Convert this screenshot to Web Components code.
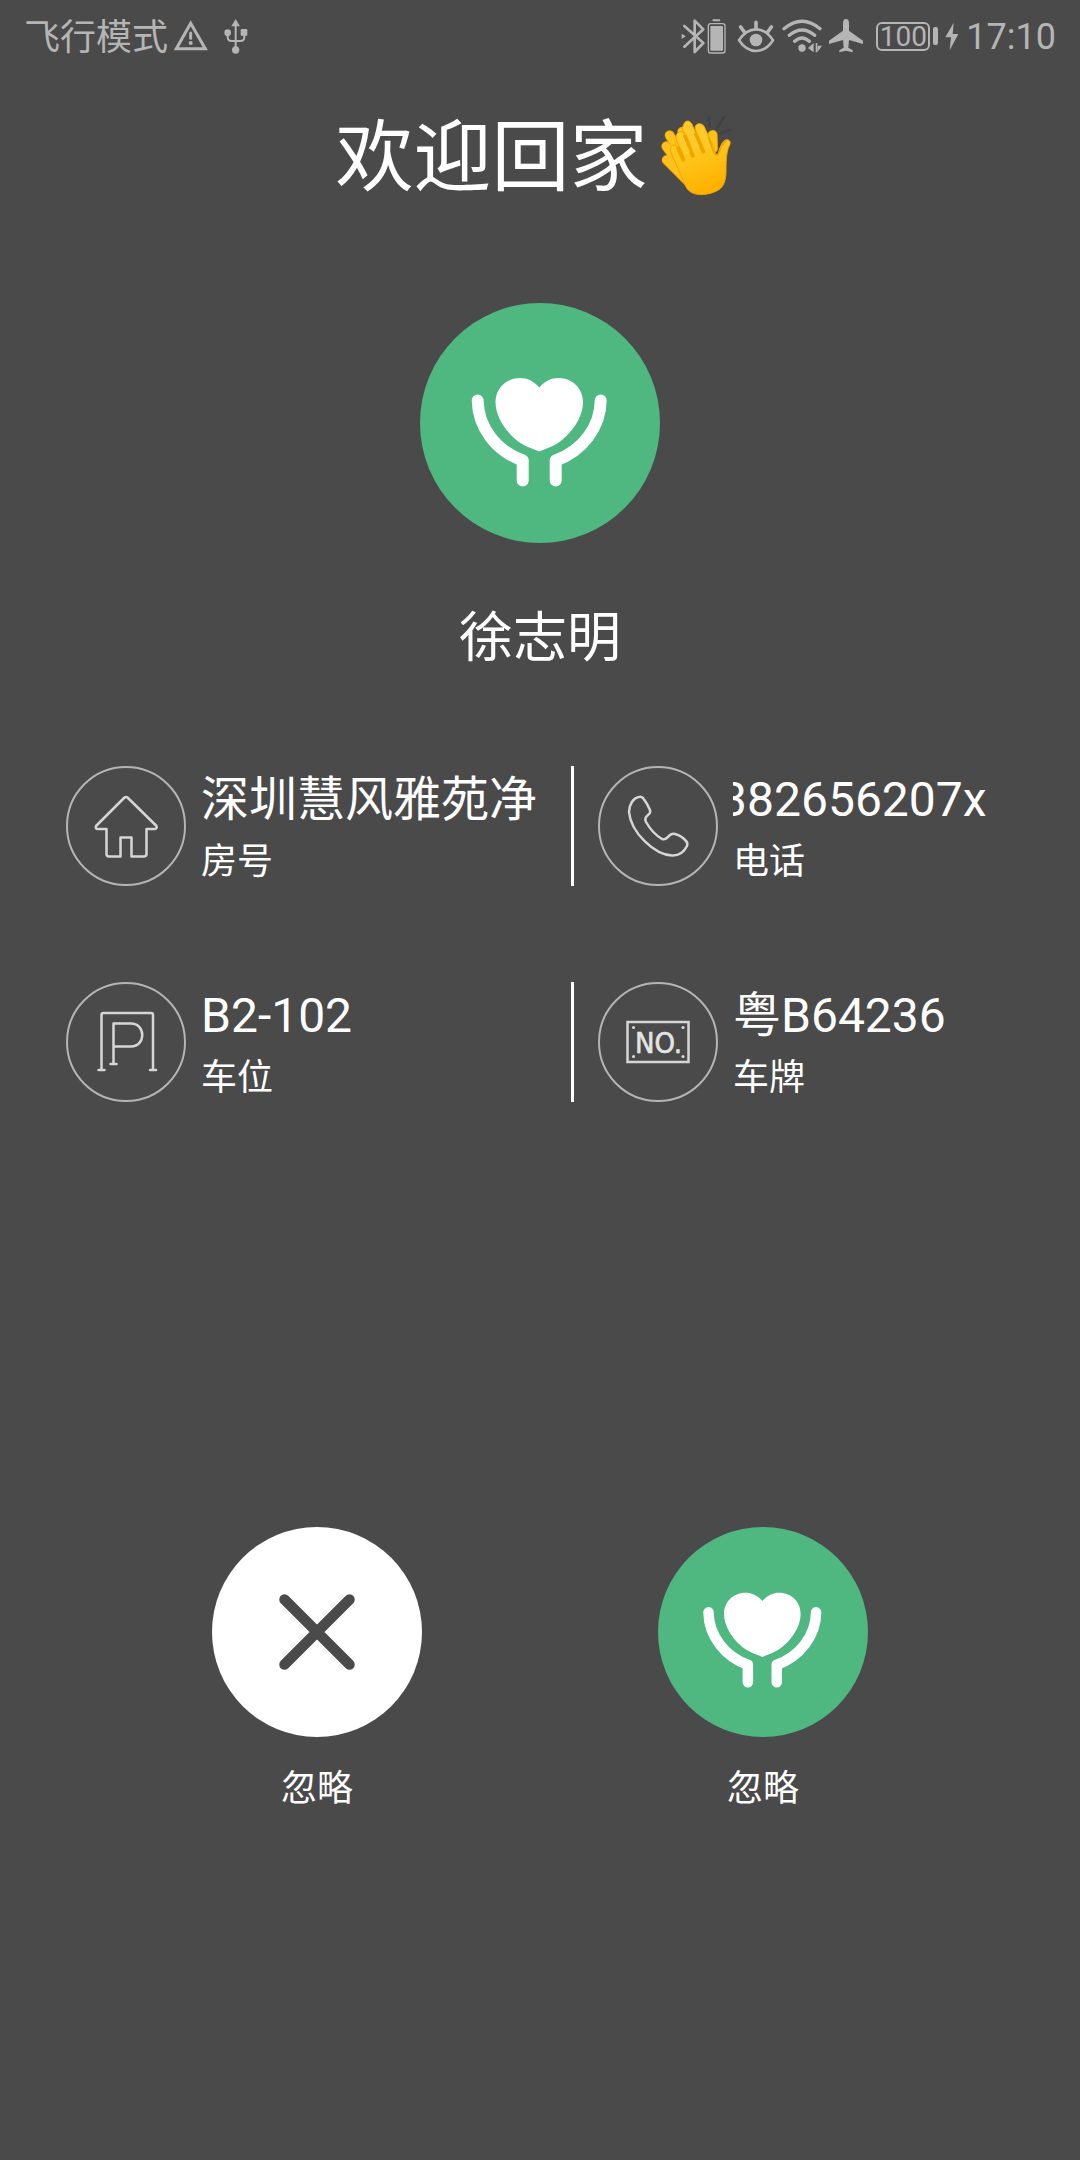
<!DOCTYPE html>
<html lang="zh-CN">
<head>
<meta charset="utf-8">
<meta name="viewport" content="width=device-width, initial-scale=1">
<title>欢迎回家</title>
<style>
  html { background: #4a4a4a; }
  body { margin: 0; color: #fff; font-family: Roboto, "Noto Sans CJK SC", sans-serif; }
</style>
</head>
<body>
<welcome-screen></welcome-screen>

<script>
const define = (name, html) => {
  const template = document.createElement('template');
  template.innerHTML = html;
  customElements.define(name, class extends HTMLElement {
    constructor() {
      super();
      this.attachShadow({ mode: 'open' }).append(template.content.cloneNode(true));
    }
  });
};

/* Android status bar */
define('status-bar', `
<style>
  :host { display: flex; justify-content: space-between; align-items: center; height: 72px; padding: 0 24px; color: #b5b5b5; font-size: 36px; line-height: 48px; box-sizing: border-box; }
  div { display: flex; align-items: center; }
  svg { height: 36px; display: block; fill: none; stroke: currentColor; stroke-linecap: round; stroke-linejoin: round; }
  .solid { fill: currentColor; stroke: none; }
  .left { gap: 6px; }
  .left span { padding-top: 4px; }
  .left svg + svg { margin-left: 10px; }
  .right { gap: 7px; }
  .bluetooth { margin-right: 4px; }
  .level { display: flex; align-items: center; margin-left: 6px; gap: 3px; }
  .level b { box-sizing: border-box; width: 54px; height: 29px; border: 2px solid; border-radius: 6px; font-weight: 400; font-size: 28px; line-height: 26px; text-align: center; }
  .level i { width: 5px; height: 18px; border-radius: 2px; background: currentColor; }
  time { padding-top: 2px; }
</style>
<div class="left">
  <span>飞行模式</span>
  <svg width="34" viewBox="521 54 102 108" aria-hidden="true"><path d="M571 70 L528 146 H615 Z" stroke-width="9" stroke-linejoin="miter"/><path d="M571 99V115" stroke-width="9"/><circle class="solid" cx="571" cy="129" r="6"/></svg>
  <svg width="24" viewBox="671 54 72 108" aria-hidden="true"><path d="M706 72V150M682 98V112Q682 123 694 123H720Q732 123 732 112V98" stroke-width="6"/><path class="solid" d="M706 57L719 79H693Z"/><circle class="solid" cx="682" cy="98" r="10"/><rect class="solid" x="721" y="87" width="20" height="20" rx="3"/><circle class="solid" cx="706" cy="150" r="11"/></svg>
</div>
<div class="right">
  <svg class="bluetooth" width="45" viewBox="58 54 135 108" aria-hidden="true"><path d="M68 78L125 129L99 156V62L125 88L68 140" stroke-width="8"/><path class="solid" d="M60 101L72 109L60 117Z"/><path d="M155 61H173" stroke-width="6"/><rect x="140" y="71" width="50" height="88" rx="7" stroke-width="4"/><rect class="solid" x="146" y="78" width="38" height="74" rx="2"/></svg>
  <svg width="38" viewBox="225 54 114 108" aria-hidden="true"><path d="M231 121Q252 88 282 88Q312 88 333 121Q312 153 282 153Q252 153 231 121Z" stroke-width="8"/><circle class="solid" cx="282" cy="120" r="19"/><path d="M282 67V86M236 81L247 96M328 81L317 96" stroke-width="11"/></svg>
  <svg width="40" viewBox="364 54 120 108" aria-hidden="true"><path d="M370 86Q424 41 478 86M386 106Q424 74 462 106M402 124Q424 104 446 124" stroke-width="10"/><circle class="solid" cx="424" cy="144" r="11"/><path class="solid" d="M459 129V157L442 144ZM465 129V157H469V137H484L470 157V129Z"/></svg>
  <svg width="34" viewBox="507 54 102 108" aria-hidden="true"><path class="solid" d="M558 57Q567 57 567 70V92L609 122V132L567 120L565 143L578 151V157L558 152L538 157V151L551 143L549 120L507 132V122L549 92V70Q549 57 558 57Z"/></svg>
  <span class="level"><b>100</b><i></i></span>
  <svg width="14" viewBox="854 54 42 108" aria-hidden="true"><path class="solid" d="M880 68L855 112H872L868 151L894 102H877Z"/></svg>
  <time>17:10</time>
</div>`);

/* Clapping hands */
define('clap-emoji', `
<style>
  :host { display: block; width: 97px; height: 100px; }
  svg { display: block; width: 100%; height: 100%; stroke-linecap: round; stroke-linejoin: round; fill: none; }
</style>
<svg viewBox="-7 12 291 300" role="img" aria-label="👏">
  <defs>
    <linearGradient id="skin" x1="0" y1="0" x2="0.3" y2="1"><stop offset="0" stop-color="#ffca28"/><stop offset="0.5" stop-color="#ffc61f"/><stop offset="1" stop-color="#ffb300"/></linearGradient>
  </defs>
  <path stroke="#424242" stroke-width="7" d="M174 34L179 66M222 36L198 73M240 73L208 86"/>
  <g stroke="#eda600" stroke-width="30"><path d="M58 91L100 160M48 124L96 190M49 165L112 228M96 80L112 110M187 90L188 130"/></g>
  <g stroke="#ffc11c" stroke-width="24"><path d="M58 91L100 160M48 124L96 190M49 165L112 228M96 80L112 110M187 90L188 130"/></g>
  <path fill="url(#skin)" stroke="#f2a600" stroke-width="3" d="M100 58C104 46 118 44 124 56L141 93L135 72C131 58 148 50 160 62L191 128C192 144 200 155 204 145C209 128 214 110 226 105C236 102 243 110 238 120C229 137 227 160 227 198C227 228 219 246 204 255C178 270 140 275 118 259C106 250 102 233 94 216L62 142C57 127 65 116 77 121L100 158L78 104C72 90 88 72 99 83L103 88L96 72Z"/>
  <g stroke="#eda600" stroke-width="12"><path d="M84 131L99 164M104 94L127 152M136 88L159 140"/></g>
  <g stroke="#ffcb2c" stroke-width="15"><path d="M112 62L139 126M150 72L172 122M89 92L110 140"/></g>
  <path stroke="#eda600" stroke-width="5" d="M175 99L188 136Q195 158 205 145Q211 120 226 109"/>
</svg>`);

/* Heart held by two hands on a green disc */
define('care-badge', `
<style>
  :host { display: block; border-radius: 50%; background: #4eb880; }
  svg { display: block; width: 100%; height: 100%; }
</style>
<svg viewBox="0 0 240 240" aria-hidden="true">
  <path fill="#fff" d="M119.300 84.500C125 78 131 75 138.500 75C153 75 163 86 163 99C163 115 151 131 138 140C132 144 125 146 119.300 148.500C113.500 146 106.500 144 100.500 140C87.500 131 75.500 115 75.500 99C75.500 86 85.500 75 100 75C107.500 75 113.500 78 119.300 84.500Z"/>
  <path fill="none" stroke="#fff" stroke-width="12" stroke-linecap="round" stroke-linejoin="round" d="M57.700 97.500C58 124 76 148 102.700 157.500V177.500M180.700 97.500C180.400 124 162.400 148 135.700 157.500V177.500"/>
</svg>`);

/* One detail: round icon, value and caption */
define('info-item', `
<style>
  :host { display: flex; gap: 15px; height: 120px; min-width: 0; }
  .icon { flex: none; width: 120px; height: 120px; }
  .text { flex: 1; min-width: 0; padding-top: 4px; }
  .value { font-size: 48px; line-height: 60px; white-space: nowrap; overflow: hidden; text-indent: var(--scrolled, 0); }
  .label { font-size: 36px; line-height: 48px; margin-top: 8px; }
</style>
<div class="icon"><slot name="icon"></slot></div>
<div class="text">
  <div class="value"><slot></slot></div>
  <div class="label"><slot name="label"></slot></div>
</div>`);

define('info-grid', `
<style>
  :host { display: grid; grid-template-columns: 505fr 3px 440fr; row-gap: 96px; padding: 0 66px; }
  hr { margin: 0; border: 0; background: #fff; }
  info-item:nth-of-type(even) { padding-left: 24px; }
  .scrolling { --scrolled: -13px; }
  svg { display: block; width: 100%; height: 100%; fill: none; stroke: #d6d6d6; stroke-width: 2.500; stroke-linecap: round; stroke-linejoin: round; }
  .ring { stroke: #b4b4b4; stroke-width: 2; }
  text { fill: #e4e4e4; stroke: #e4e4e4; stroke-width: 0.600; font: 29px "Liberation Sans Narrow", "DejaVu Sans Condensed", sans-serif; }
  .dot { fill: #dedede; stroke: none; }
</style>
<info-item>
  <svg slot="icon" viewBox="0 0 120 120" aria-hidden="true"><circle class="ring" cx="60" cy="60" r="59"/><path d="M58 32Q60 30 62 32L90.500 60Q91.500 63 88 63H80.500V88Q80.500 90.500 77.500 90.500H65.500V71.500H54.500V90.500H43Q40.500 90.500 40.500 88V63H32Q29 63 30 60Z"/></svg>
  深圳慧风雅苑净<span slot="label">房号</span>
</info-item>
<hr>
<info-item class="scrolling">
  <svg slot="icon" viewBox="0 0 120 120" aria-hidden="true"><circle class="ring" cx="60" cy="60" r="59"/><path d="M41 31Q43 30 45 32Q49 37 52 44Q53 47 50 49Q46 52 48 56C52 63 59 70 64 73Q67 74 70 71Q73 67 77 68Q84 70 88 75Q90 77 89 80Q84 90 74 89.500C57 89 33 67 31 46C31 39 35 32 41 31Z"/></svg>
  382656207x<span slot="label">电话</span>
</info-item>
<info-item>
  <svg slot="icon" viewBox="0 0 120 120" aria-hidden="true"><circle class="ring" cx="60" cy="60" r="59"/><path d="M35.500 87V33Q35.500 31 37.500 31H85Q87 31 87 33V87M32.500 88H38.500M84 88H90M47.500 81V41.500H65C80 41.500 80 64.500 65 64.500H48M44.500 82H50.500"/></svg>
  B2-102<span slot="label">车位</span>
</info-item>
<hr>
<info-item>
  <svg slot="icon" viewBox="0 0 120 120" aria-hidden="true"><circle class="ring" cx="60" cy="60" r="59"/><rect x="29.500" y="40" width="61" height="40" stroke-linejoin="miter"/><circle class="dot" cx="35.500" cy="45.500" r="1.500"/><circle class="dot" cx="85" cy="45.500" r="1.500"/><circle class="dot" cx="35.500" cy="74.500" r="1.500"/><circle class="dot" cx="85" cy="74.500" r="1.500"/><text x="37" y="71">NO.</text></svg>
  粤B64236<span slot="label">车牌</span>
</info-item>`);

define('round-action', `
<style>
  :host { display: block; }
  button { display: flex; flex-direction: column; align-items: center; gap: 28px; margin: 0; padding: 0; border: 0; background: none; color: inherit; font: inherit; font-size: 36px; line-height: 48px; cursor: pointer; }
  .disc { width: 210px; height: 210px; }
</style>
<button type="button"><span class="disc"><slot name="icon"></slot></span><span><slot></slot></span></button>`);

define('welcome-screen', `
<style>
  :host { display: block; min-height: 100vh; }
  main { display: flex; flex-direction: column; }
  h1, h2 { margin: 0; font-weight: 400; text-align: center; }
  h1 { display: flex; justify-content: center; margin-top: 37px; font-size: 78px; line-height: 100px; }
  .avatar { align-self: center; width: 240px; height: 240px; margin-top: 94px; }
  h2 { margin-top: 64px; font-size: 54px; line-height: 64px; }
  info-grid { margin-top: 95px; }
  nav { display: flex; justify-content: center; gap: 236px; margin-top: 425px; }
  .action { height: 210px; }
  .close { display: block; width: 210px; height: 210px; }
</style>
<status-bar></status-bar>
<main>
  <h1>欢迎回家<clap-emoji></clap-emoji></h1>
  <care-badge class="avatar"></care-badge>
  <h2>徐志明</h2>
  <info-grid></info-grid>
  <nav>
    <round-action>
      <svg class="close" slot="icon" viewBox="0 0 210 210" aria-hidden="true"><circle cx="105" cy="105" r="105" fill="#fff"/><path d="M72.500 72.500L137.500 137.500M137.500 72.500L72.500 137.500" stroke="#4a4a4a" stroke-width="10.500" stroke-linecap="round"/></svg>
      忽略
    </round-action>
    <round-action><care-badge class="action" slot="icon"></care-badge>忽略</round-action>
  </nav>
</main>`);
</script>
</body>
</html>
